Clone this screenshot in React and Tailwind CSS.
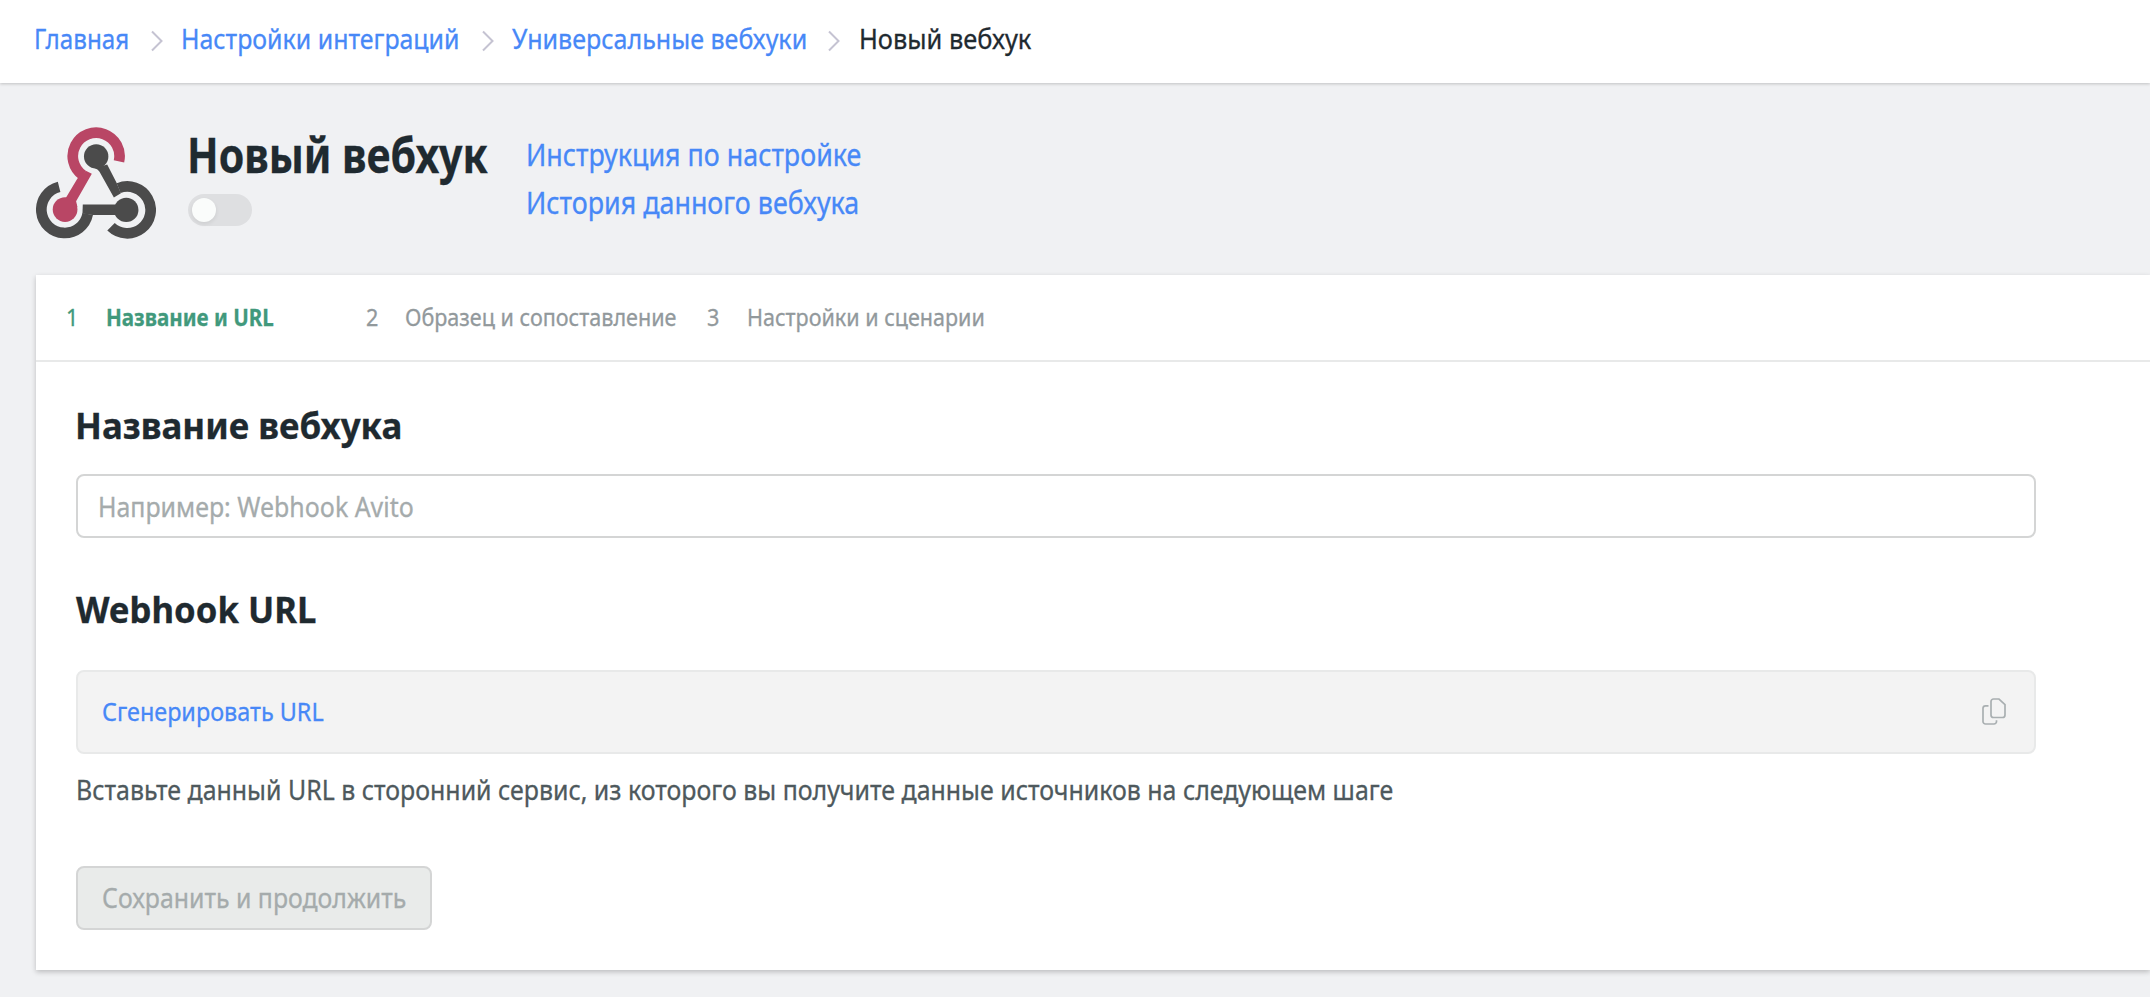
import { useState } from 'react';

const STEPS = [
  { id: 1, title: 'Название и URL', width: 'w-[300px]', scale: 'scale-x-[0.857]' },
  { id: 2, title: 'Образец и сопоставление', width: 'w-[341px]', scale: 'scale-x-[0.898]' },
  { id: 3, title: 'Настройки и сценарии', width: 'w-[320px]', scale: 'scale-x-[0.897]' },
];

function Chevron() {
  return (
    <svg className="mt-3 h-[22px] w-3 shrink-0" viewBox="0 0 12 22" fill="none">
      <path d="M1 1.5 10.5 11 1 20.5" stroke="#c5c3d2" strokeWidth="2" />
    </svg>
  );
}

function WebhookLogo() {
  return (
    <svg className="mt-11 h-28 w-[120px] shrink-0" viewBox="48 51 359 335" fill="none">
      <g stroke="#4b4b4b" strokeWidth="32">
        <path d="M117.1 230.1A70 70 0 1 0 202.7 311.4" />
        <path d="M272.4 349.4A70 70 0 1 0 295.3 233.9" />
      </g>
      <g fill="#4b4b4b">
        <path d="M188 283H300V314H217L187 310Z" />
        <path d="M261 163 289 218 302 249 281 262 238 185Q234 178 225 174Z" />
        <circle cx="228" cy="139" r="36.5" />
        <circle cx="318" cy="299" r="36.5" />
      </g>
      <path d="M187.8 195.3A70 70 0 1 1 296.2 153.7" stroke="#b94665" strokeWidth="32" />
      <path d="M172 205 197 182 215 191 168 273 172 290 125 275 138 262Z" fill="#b94665" />
      <circle cx="135" cy="298" r="37" fill="#b94665" />
    </svg>
  );
}

function CopyIcon() {
  return (
    <svg className="h-[27px] w-6" viewBox="0 0 24 27" fill="none" stroke="#a9afb1" strokeWidth="1.7">
      <path d="M11.5 1H17L23 6.5V17a2.5 2.5 0 0 1-2.5 2.5h-9A2.5 2.5 0 0 1 9 17V3.500A2.500 2.500 0 0 1 11.500 1Z" />
      <path d="M6.500 7.800h-3A2.500 2.500 0 0 0 1 10.300V23.500A2.500 2.500 0 0 0 3.500 26H12a2.500 2.500 0 0 0 2.500-2.500v-1.200" />
    </svg>
  );
}

function Breadcrumbs() {
  return (
    <header className="relative h-[83px] bg-white pt-[18px] shadow-[0_1px_3px_rgba(0,0,0,0.2)]">
      <nav className="flex pl-[34px] text-[28px] leading-10 whitespace-nowrap text-[#4788f7]">
        <a href="#" className="w-[117px]">
          <span className="inline-block origin-left scale-x-[0.865]">Главная</span>
        </a>
        <Chevron />
        <a href="#" className="ml-[18px] w-[301px]">
          <span className="inline-block origin-left scale-x-[0.889]">Настройки интеграций</span>
        </a>
        <Chevron />
        <a href="#" className="ml-[18px] w-[316px]">
          <span className="inline-block origin-left scale-x-[0.894]">Универсальные вебхуки</span>
        </a>
        <Chevron />
        <span className="ml-[19px]">
          <span className="inline-block origin-left scale-x-[0.907] text-[#1f2a30]">Новый вебхук</span>
        </span>
      </nav>
    </header>
  );
}

function Toggle({ checked, onChange }) {
  return (
    <button
      role="switch"
      aria-checked={checked}
      onClick={() => onChange(!checked)}
      className="mt-[9px] ml-px flex h-8 w-16 items-center rounded-full bg-[#dedfe1] px-1"
    >
      <span className="size-6 rounded-full bg-[#fafcfb] shadow-[0_2px_4px_rgba(0,0,0,0.08)]" />
    </button>
  );
}

function PageTitle() {
  const [enabled, setEnabled] = useState(false);

  return (
    <div className="flex h-48 pl-9">
      <WebhookLogo />
      <div className="ml-[31px] w-[339px] pt-[42px]">
        <h1 className="origin-left scale-x-[0.856] text-[48px] leading-[60px] font-bold whitespace-nowrap text-[#1f2a30]">
          Новый вебхук
        </h1>
        <Toggle checked={enabled} onChange={setEnabled} />
      </div>
      <div className="flex flex-col pt-12 text-[30px] leading-[48px] whitespace-nowrap text-[#4788f7]">
        <a href="#" className="origin-left scale-x-[0.895]">Инструкция по настройке</a>
        <a href="#" className="origin-left scale-x-[0.895]">История данного вебхука</a>
      </div>
    </div>
  );
}

function Steps({ current }) {
  return (
    <div className="flex h-[87px] items-center border-b-2 border-[#e8e9e9] pb-0.5 pl-[30px] text-2xl whitespace-nowrap">
      {STEPS.map((step) => (
        <div
          key={step.id}
          className={step.id === current ? `flex ${step.width} text-[#41997c]` : `flex ${step.width} text-[#92999c]`}
        >
          <span className="w-10 origin-left scale-x-[0.9]">{step.id}</span>
          <span className={`inline-block origin-left ${step.scale} ${step.id === current ? 'font-bold' : ''}`}>
            {step.title}
          </span>
        </div>
      ))}
    </div>
  );
}

export default function App() {
  const [name, setName] = useState('');

  return (
    <div className="h-[997px] overflow-hidden bg-[#f0f1f3] font-['Noto_Sans',sans-serif] [-webkit-text-stroke:0.3px]">
      <Breadcrumbs />
      <PageTitle />

      <main className="ml-9 h-[695px] bg-white shadow-[0_2px_5px_rgba(0,0,0,0.22)]">
        <Steps current={1} />

        <div className="w-[2000px] px-10 pt-10">
          <h2 className="-ml-px origin-left scale-x-[0.97] text-4xl leading-[48px] font-bold text-[#1f2a30]">
            Название вебхука
          </h2>
          <div className="mt-6 h-16 w-[1960px] rounded-lg border-2 border-[#d4d5d5] pl-5">
            <input
              value={name}
              onChange={(e) => setName(e.target.value)}
              placeholder="Например: Webhook Avito"
              className="h-full w-full origin-left scale-x-[0.89] text-[28px] outline-none placeholder:text-[#a5abac]"
            />
          </div>

          <h2 className="mt-12 origin-left scale-x-[0.964] text-4xl leading-[48px] font-bold text-[#1f2a30]">
            Webhook URL
          </h2>
          <div className="mt-9 flex h-[84px] w-[1960px] items-center justify-between rounded-lg border-2 border-[#e8e9e9] bg-[#f3f3f3] pr-7 pb-0.5 pl-6">
            <button className="origin-left scale-x-[0.9] text-[26px] text-[#4788f7]">Сгенерировать URL</button>
            <CopyIcon />
          </div>
          <p className="mt-[15px] origin-left scale-x-[0.8895] text-[28px] leading-10 whitespace-nowrap text-[#4e595d]">
            Вставьте данный URL в сторонний сервис, из которого вы получите данные источников на следующем шаге
          </p>

          <button
            disabled
            className="mt-[57px] flex h-16 w-[356px] items-center rounded-lg border-2 border-[#d4d5d5] bg-[#e9ebea] pb-0.5 pl-6 text-[28px] text-[#a5abac]"
          >
            <span className="inline-block origin-left scale-x-[0.887] whitespace-nowrap">Сохранить и продолжить</span>
          </button>
        </div>
      </main>
    </div>
  );
}
